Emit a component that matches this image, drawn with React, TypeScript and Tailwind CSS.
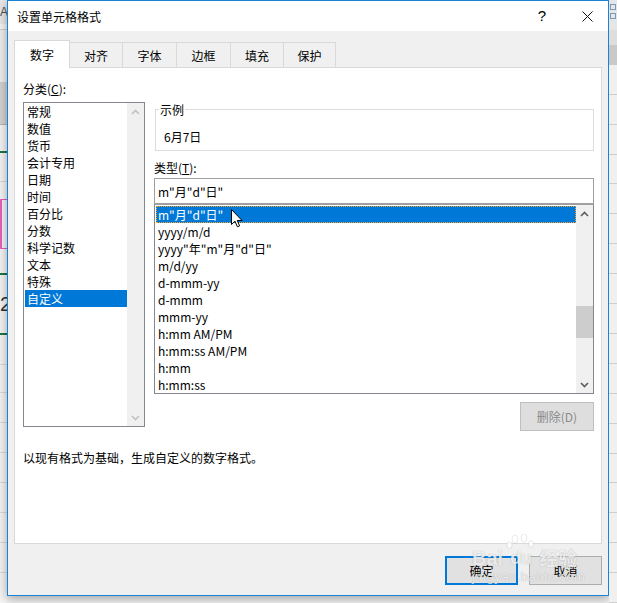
import React from 'react';

const categories = ['常规', '数值', '货币', '会计专用', '日期', '时间', '百分比', '分数', '科学记数', '文本', '特殊', '自定义'];

const types = [
  'm"月"d"日"',
  'yyyy/m/d',
  'yyyy"年"m"月"d"日"',
  'm/d/yy',
  'd-mmm-yy',
  'd-mmm',
  'mmm-yy',
  'h:mm AM/PM',
  'h:mm:ss AM/PM',
  'h:mm',
  'h:mm:ss',
];

const tabs = [
  { label: '数字', w: 'w-[56px]' },
  { label: '对齐', w: 'w-[53px]' },
  { label: '字体', w: 'w-[54px]' },
  { label: '边框', w: 'w-[54px]' },
  { label: '填充', w: 'w-[53px]' },
  { label: '保护', w: 'w-[52px]' },
];

const Chevron = ({ up, color }: { up?: boolean; color: string }) => (
  <svg width="9" height="6" viewBox="0 0 9 6">
    <path d={up ? 'M1 5 L4.5 1.5 L8 5' : 'M1 1 L4.5 4.5 L8 1'} fill="none" stroke={color} strokeWidth="1.7" />
  </svg>
);

// strip of the excel sheet that shows left of the dialog
const LeftSheet = () => (
  <div className="w-[7px] shrink-0 flex flex-col bg-[#f4f4f4] overflow-hidden">
    <div className="h-[24px] bg-[#e8e8e8] font-['Liberation_Sans',sans-serif] text-[12px] leading-[24px] text-[#555]">A</div>
    <div className="h-[6px] border-b border-[#cfcfcf]" />
    <div className="h-[53px] bg-[#ededed] border-b border-[#cfcfcf]" />
    <div className="h-[42px] bg-[#d2d2d2] border-b border-[#b5b5b5]" />
    <div className="h-[26px]" />
    <div className="h-[2px] bg-[#217346]" />
    <div className="h-[29px] border-b border-[#dadada]" />
    <div className="h-[17px]" />
    <div className="h-[50px] border-l-[2px] border-t border-b border-[#e85fc0]" />
    <div className="h-[26px] border-b-[2px] border-[#217346]" />
    <div className="h-[58px] flex items-center font-['Liberation_Sans',sans-serif] text-[20px] text-[#333]">2</div>
    <div className="h-[2px] bg-[#217346]" />
    <div className="h-[30px] border-b border-[#dadada]" />
    <div className="h-[28px] border-b border-[#dadada]" />
    <div className="h-[30px] border-b border-[#dadada]" />
    <div className="h-[30px] border-b border-[#dadada]" />
    <div className="h-[30px] border-b border-[#dadada]" />
    <div className="h-[30px] border-b border-[#dadada]" />
    <div className="h-[30px] border-b border-[#dadada]" />
    <div className="h-[30px] border-b border-[#dadada]" />
  </div>
);

const RightSheet = () => (
  <div className="flex-1 flex flex-col bg-[#f0f0f0] overflow-hidden">
    <div className="h-[30px] bg-[#e6e6e6] flex flex-col gap-[3px] pt-[4px] pl-[1px]">
      <div className="w-[6px] h-[6px] border border-[#7a98b8]" />
      <div className="w-[6px] h-[6px] border border-[#7a98b8]" />
    </div>
    <div className="h-[15px] bg-[#dedede]" />
    <div className="h-[20px] bg-[#c9c9c9]" />
    {Array.from({ length: 18 }).map((_, i) => (
      <div key={i} className="h-[30px] border-b border-[#cfcfcf]" />
    ))}
  </div>
);

const App = () => {
  return (
    <div className="relative flex w-[617px] h-[603px] overflow-hidden bg-[#f0f0f0] font-['Noto_Sans_CJK_SC','Noto_Sans',sans-serif] text-[12px] text-black">
      <LeftSheet />

      <div className="w-[602px] h-[596px] shrink-0 flex flex-col border border-[#1883d7] bg-[#f0f0f0] shadow-[0_2px_10px_rgba(0,0,0,0.35)]">
        {/* title bar */}
        <div className="h-[30px] bg-white flex items-center">
          <span className="flex-1 pl-[9px] leading-[17px]">设置单元格格式</span>
          <span className="w-[50px] text-center font-['Liberation_Sans',sans-serif] text-[15px] leading-[30px]">?</span>
          <span className="w-[41px] flex justify-center">
            <svg width="11" height="11" viewBox="0 0 11 11">
              <path d="M0.5 0.5 L10.5 10.5 M10.5 0.5 L0.5 10.5" stroke="#111" strokeWidth="1" />
            </svg>
          </span>
        </div>

        <div className="flex-1 flex flex-col px-[6px] pt-[9px]">
          {/* tabs */}
          <div className="flex items-end h-[27px]">
            {tabs.map((t, i) =>
              i === 0 ? (
                <div
                  key={t.label}
                  className={`${t.w} relative z-10 -mb-px h-[28px] flex items-center justify-center bg-white border-l border-t border-r border-[#d9d9d9] pt-[1px]`}
                >
                  {t.label}
                </div>
              ) : (
                <div
                  key={t.label}
                  className={`${t.w} h-[25px] flex items-center justify-center border-t border-r border-[#d9d9d9] pt-[1px]`}
                >
                  {t.label}
                </div>
              )
            )}
          </div>

          {/* panel */}
          <div className="h-[477px] flex flex-col border border-[#d9d9d9] bg-white pl-[8px] pr-[6px]">
            <div className="flex gap-[9px]">
              {/* categories */}
              <div className="w-[122px] shrink-0 pt-[12px]">
                <div className="leading-[17px]">
                  分类(<span className="underline">C</span>):
                </div>
                <div className="mt-[5px] h-[325px] flex border border-[#828790]">
                  <div className="flex-1 pl-[1px]">
                    {categories.map((c) => (
                      <div
                        key={c}
                        className={
                          c === '自定义'
                            ? 'h-[17px] leading-[17px] pl-[2px] bg-[#0078d7] text-white'
                            : 'h-[17px] leading-[17px] pl-[2px]'
                        }
                      >
                        {c}
                      </div>
                    ))}
                  </div>
                  <div className="w-[17px] flex flex-col justify-between bg-[#f0f0f0]">
                    <div className="h-[17px] flex items-center justify-center">
                      <Chevron up color="#c2c2c2" />
                    </div>
                    <div className="h-[17px] flex items-center justify-center">
                      <Chevron color="#c2c2c2" />
                    </div>
                  </div>
                </div>
              </div>

              {/* types */}
              <div className="w-[440px] shrink-0 flex flex-col">
                <div className="relative mt-[41px] ml-[1px] h-[42px] flex items-center border border-[#dcdcdc] pl-[8px] pt-[12px]">
                  <span className="absolute left-[3px] -top-[9px] bg-white px-[1px] leading-[17px]">示例</span>
                  <span className="leading-[17px]">6月7日</span>
                </div>

                <div className="mt-[8px] leading-[17px]">
                  类型(<span className="underline">T</span>):
                </div>
                <div className="mt-[2px] h-[26px] flex items-center border border-[#a0a0a0] pl-[3px]">
                  <span className="leading-[17px]">m"月"d"日"</span>
                </div>

                <div className="h-[190px] flex border border-[#828790] border-t-[#a0a0a0]">
                  <div className="flex-1 pt-[1px] pl-[1px]">
                    {types.map((t, i) => (
                      <div
                        key={t}
                        className={
                          i === 0
                            ? 'h-[17px] leading-[15px] pl-[1px] bg-[#0078d7] text-white border border-dotted border-[#f5a623]'
                            : 'h-[17px] leading-[17px] pl-[2px]'
                        }
                      >
                        {t}
                      </div>
                    ))}
                  </div>
                  <div className="w-[17px] flex flex-col bg-[#f0f0f0]">
                    <div className="h-[17px] flex items-center justify-center">
                      <Chevron up color="#606060" />
                    </div>
                    <div className="mt-[84px] h-[32px] bg-[#cdcdcd]" />
                    <div className="flex-1" />
                    <div className="h-[17px] flex items-center justify-center">
                      <Chevron color="#606060" />
                    </div>
                  </div>
                </div>

                <div className="mt-[8px] self-end w-[74px] h-[29px] flex items-center justify-center border border-[#bfbfbf] bg-[#dedede] text-[#8a8a8a]">
                  删除(D)
                </div>
              </div>
            </div>

            <p className="mt-[18px] leading-[17px]">以现有格式为基础，生成自定义的数字格式。</p>
          </div>

          {/* buttons */}
          <div className="mt-[12px] flex justify-end gap-[11px]">
            <div className="w-[73px] h-[29px] flex items-center justify-center border-2 border-[#0078d7] bg-[#e1e1e1]">确定</div>
            <div className="w-[73px] h-[29px] flex items-center justify-center border border-[#adadad] bg-[#e1e1e1]">取消</div>
          </div>
        </div>
      </div>

      <RightSheet />

      {/* mouse pointer */}
      <svg className="absolute left-[231px] top-[209px]" width="12" height="19" viewBox="0 0 12 19">
        <path d="M0.5 0.5 L0.5 15.5 L4 12.2 L6.4 17.8 L8.6 16.9 L6.3 11.5 L11 11.5 Z" fill="#fff" stroke="#000" strokeWidth="1" />
      </svg>

      {/* watermark */}
      <div className="absolute left-[472px] top-[534px] flex flex-col text-white/80 [text-shadow:0_0_1px_rgba(0,0,0,0.35)] pointer-events-none">
        <div className="flex items-end h-[36px]">
          <span className="font-['Liberation_Sans',sans-serif] font-bold text-[20px] leading-[20px] mb-[2px]">Bai</span>
          <span className="relative w-[36px] h-[36px] flex items-end justify-center">
            <svg className="absolute left-[3px] top-0" width="30" height="24" viewBox="0 0 30 24">
              <g fill="rgba(255,255,255,0.75)" stroke="rgba(0,0,0,0.15)" strokeWidth="0.6">
                <ellipse cx="9" cy="5" rx="3" ry="4" />
                <ellipse cx="18" cy="4" rx="3" ry="4" />
                <ellipse cx="3.5" cy="11" rx="2.6" ry="3.4" />
                <ellipse cx="25" cy="10" rx="2.6" ry="3.4" />
              </g>
            </svg>
            <span className="relative font-['Liberation_Sans',sans-serif] font-bold text-[18px] leading-[20px] mb-[2px]">du</span>
          </span>
          <span className="text-[19px] leading-[20px] mb-[2px] font-bold">经验</span>
        </div>
        <span className="font-['Liberation_Sans',sans-serif] text-[13px] leading-[14px] tracking-[0.5px]">jingyan.baidu.com</span>
      </div>
    </div>
  );
};

export default App;
